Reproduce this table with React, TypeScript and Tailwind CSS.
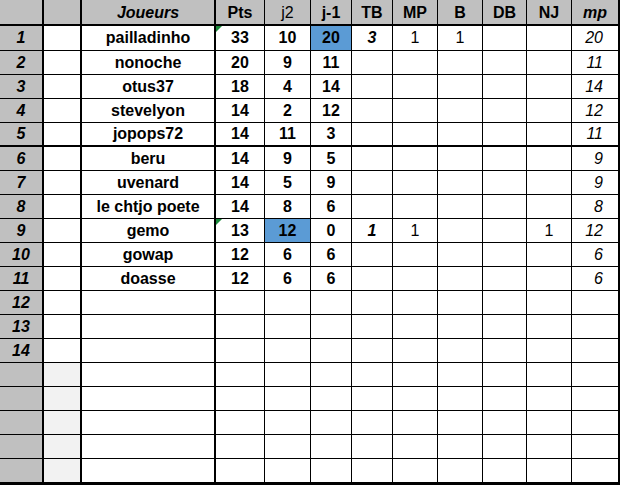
import React from 'react';

type Row = {
  n?: number;
  name?: string;
  pts?: string;
  j2?: string;
  j1?: string;
  tb?: string;
  mp?: string;
  b?: string;
  nj?: string;
  mpi?: string;
  hlJ2?: boolean;
  hlJ1?: boolean;
  flag?: boolean;
};

const rows: Row[] = [
  { n: 1, name: 'pailladinho', pts: '33', j2: '10', j1: '20', tb: '3', mp: '1', b: '1', mpi: '20', hlJ1: true, flag: true },
  { n: 2, name: 'nonoche', pts: '20', j2: '9', j1: '11', mpi: '11' },
  { n: 3, name: 'otus37', pts: '18', j2: '4', j1: '14', mpi: '14' },
  { n: 4, name: 'stevelyon', pts: '14', j2: '2', j1: '12', mpi: '12' },
  { n: 5, name: 'jopops72', pts: '14', j2: '11', j1: '3', mpi: '11' },
  { n: 6, name: 'beru', pts: '14', j2: '9', j1: '5', mpi: '9' },
  { n: 7, name: 'uvenard', pts: '14', j2: '5', j1: '9', mpi: '9' },
  { n: 8, name: 'le chtjo poete', pts: '14', j2: '8', j1: '6', mpi: '8' },
  { n: 9, name: 'gemo', pts: '13', j2: '12', j1: '0', tb: '1', mp: '1', nj: '1', mpi: '12', hlJ2: true, flag: true },
  { n: 10, name: 'gowap', pts: '12', j2: '6', j1: '6', mpi: '6' },
  { n: 11, name: 'doasse', pts: '12', j2: '6', j1: '6', mpi: '6' },
  { n: 12 },
  { n: 13 },
  { n: 14 },
  {},
  {},
  {},
  {},
  {},
];

const cols = 'grid grid-cols-[44px_38px_134px_49px_46px_41px_41px_45px_45px_44px_45px_48px]';
const cell = 'flex items-center justify-center border-r border-black';
const thick = 'flex items-center justify-center border-r-2 border-black';

export default function App() {
  return (
    <div className="w-[620px] h-[485px] bg-white text-black text-[16px] leading-none font-['Liberation_Sans',Arial,sans-serif] overflow-hidden">
      {/* header */}
      <div className={`${cols} h-[26px] border-b-2 border-black bg-[#c0c0c0] [&>div]:pt-[2px]`}>
        <div className={thick}></div>
        <div className={thick}></div>
        <div className={`${thick} font-bold italic`}>Joueurs</div>
        <div className={`${cell} font-bold`}>Pts</div>
        <div className={cell}>j2</div>
        <div className={`${cell} font-bold`}>j-1</div>
        <div className={`${cell} font-bold`}>TB</div>
        <div className={`${cell} font-bold`}>MP</div>
        <div className={`${cell} font-bold`}>B</div>
        <div className={`${cell} font-bold`}>DB</div>
        <div className={`${cell} font-bold`}>NJ</div>
        <div className={`${thick} font-bold italic`}>mp</div>
      </div>

      {rows.map((r, i) => {
        const blank = r.n === undefined;
        const h = i === 0 ? 'h-[25px] border-b' : i === 4 ? 'h-[24px] border-b-2' : i === rows.length - 1 ? 'h-[26px] border-b-[3px]' : 'h-[24px] border-b';
        return (
          <div key={i} className={`${cols} ${h} border-black`}>
            <div className={`${thick} bg-[#c0c0c0] font-bold italic`}>{r.n}</div>
            <div className={`${thick} ${blank ? 'bg-[#f2f2f2]' : 'bg-white'}`}></div>
            <div className={`${thick} font-bold`}>{r.name}</div>
            <div className={`${cell} relative font-bold`}>
              {r.flag && (
                <span className="absolute left-0 top-0 w-0 h-0 border-t-[6px] border-t-[#1a8a3a] border-r-[6px] border-r-transparent"></span>
              )}
              {r.pts}
            </div>
            <div className={`${cell} font-bold ${r.hlJ2 ? 'bg-[#5b9bd5]' : ''}`}>{r.j2}</div>
            <div className={`${cell} font-bold ${r.hlJ1 ? 'bg-[#5b9bd5]' : ''}`}>{r.j1}</div>
            <div className={`${cell} font-bold italic`}>{r.tb}</div>
            <div className={cell}>{r.mp}</div>
            <div className={cell}>{r.b}</div>
            <div className={cell}></div>
            <div className={cell}>{r.nj}</div>
            <div className="flex items-center justify-end pr-[15px] border-r-2 border-black italic">{r.mpi}</div>
          </div>
        );
      })}
    </div>
  );
}
